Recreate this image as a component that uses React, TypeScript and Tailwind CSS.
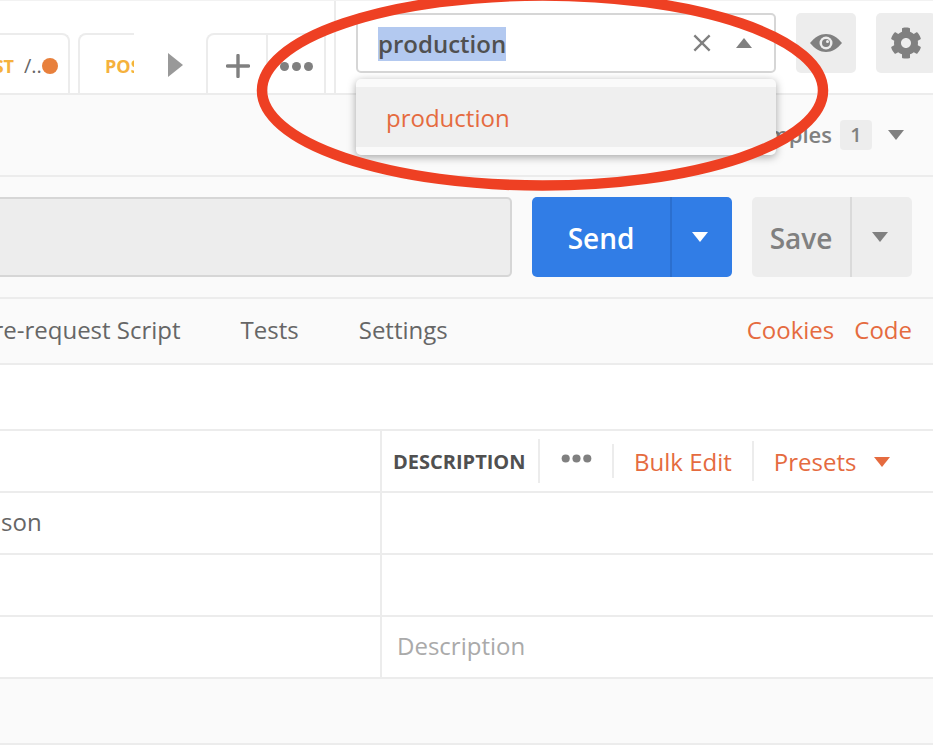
import React from "react";
import { FaCog } from "react-icons/fa";

function Tri({ dir, className }: { dir: "up" | "down" | "right"; className: string }) {
  const pts = dir === "up" ? "0,12 16,12 8,0" : dir === "down" ? "0,0 16,0 8,12" : "0,0 15,12 0,24";
  const vb = dir === "right" ? "0 0 15 24" : "0 0 16 12";
  return (
    <svg viewBox={vb} preserveAspectRatio="none" className={className} fill="currentColor">
      <polygon points={pts} />
    </svg>
  );
}

function Dots({ className }: { className: string }) {
  return (
    <span className={"flex gap-[3px] shrink-0 " + className}>
      <span className="w-[9px] h-[9px] rounded-full bg-[#808080]" />
      <span className="w-[9px] h-[9px] rounded-full bg-[#808080]" />
      <span className="w-[9px] h-[9px] rounded-full bg-[#808080]" />
    </span>
  );
}

function Row({ children }: { children?: React.ReactNode }) {
  return <div className="h-[62px] border-b-2 border-[#ececec] flex bg-white">{children}</div>;
}

export default function App() {
  return (
    <div className="relative w-[933px] h-[749px] overflow-hidden bg-white font-['Open_Sans',sans-serif] text-[24px] text-[#666666]">
      {/* top bar */}
      <div className="h-[95px] border-t border-[#f2f2f2] border-b-2 border-b-[#ececec] flex items-end">
        <div className="w-[70px] shrink-0 h-[60px] border-t-2 border-r-2 border-[#ececec] rounded-tr-lg flex items-center overflow-hidden pt-[4px]">
          <span className="ml-[-36px] w-[50px] text-right text-[18px] font-bold text-[#f5b13d] shrink-0">POST</span>
          <span className="ml-[10px] text-[20px] w-[18px] overflow-hidden shrink-0 whitespace-nowrap">/..</span>
          <span className="w-4 h-4 rounded-full bg-[#e8803c] shrink-0" />
        </div>
        <div className="ml-[8px] w-[56px] shrink-0 h-[60px] border-t-2 border-l-2 border-[#ececec] rounded-tl-lg flex items-center overflow-hidden pt-[4px]">
          <span className="ml-[25px] text-[18px] font-bold text-[#f5b13d] shrink-0">POST</span>
        </div>
        <div className="w-[72px] shrink-0 h-[60px] flex items-center pt-[4px]">
          <Tri dir="right" className="w-[15px] h-[24px] text-[#999999] ml-[34px]" />
        </div>
        <div className="w-[62px] shrink-0 h-[60px] border-t-2 border-l-2 border-r-2 border-[#ececec] rounded-tl-lg flex items-center justify-center pt-[4px]">
          <svg viewBox="0 0 24 24" className="w-6 h-6 ml-[2px]" stroke="#808080" strokeWidth="3.4" strokeLinecap="round">
            <path d="M12 1.5v21M1.5 12h21" />
          </svg>
        </div>
        <div className="w-[58px] shrink-0 h-[60px] border-t-2 border-r-2 border-[#ececec] flex items-center justify-center pt-[4px]">
          <Dots className="" />
        </div>
        <div className="ml-[8px] shrink-0 w-[2px] h-[92px] bg-[#ececec]" />
        <div className="ml-[20px] shrink-0 h-[92px] flex items-start pt-[12px]">
          <div className="w-[420px] h-[60px] bg-white border-2 border-[#d6d6d6] rounded-[5px] flex items-center">
            <span className="ml-[20px] mt-[2px] font-semibold leading-[34px] bg-[#b3c9f0] text-[#505050]">production</span>
            <svg viewBox="0 0 20 20" className="w-[18px] h-[18px] ml-auto" stroke="#808080" strokeWidth="2.6" fill="none">
              <path d="M1.5 1.5l17 17M18.5 1.5l-17 17" />
            </svg>
            <Tri dir="up" className="w-[16px] h-[10px] ml-[25px] mr-[22px] text-[#808080]" />
          </div>
          <div className="ml-[20px] w-[60px] h-[60px] bg-[#ededed] rounded-[5px] flex items-center justify-center">
            <svg viewBox="0 0 32 18" className="w-[32px] h-[18px]">
              <path d="M0 9C5 3 10 0 16 0s11 3 16 9c-5 6-10 9-16 9S5 15 0 9z" fill="#808080" />
              <circle cx="16" cy="9" r="6.5" fill="#ededed" />
              <circle cx="16" cy="9" r="4" fill="#808080" />
              <circle cx="17.5" cy="7.5" r="1.5" fill="#ededed" />
            </svg>
          </div>
          <div className="ml-[20px] w-[60px] h-[60px] bg-[#ededed] rounded-[5px] flex items-center justify-center">
            <FaCog className="w-[32px] h-[32px] text-[#808080]" />
          </div>
        </div>
      </div>

      {/* examples row */}
      <div className="h-[82px] bg-[#fafafa] border-b-2 border-[#ececec] flex items-center justify-end">
        <span className="font-semibold text-[22px] text-[#808080] leading-none mt-[-2px]">Examples</span>
        <span className="ml-[8px] w-[32px] h-[30px] rounded bg-[#ededed] flex items-center justify-center text-[20px] font-semibold text-[#808080]">1</span>
        <Tri dir="down" className="ml-[16px] mr-[29px] w-[16px] h-[10px] text-[#808080]" />
      </div>

      {/* url row */}
      <div className="h-[122px] bg-[#fafafa] border-b-2 border-[#ececec] flex items-start pt-[20px]">
        <div className="w-[512px] h-[80px] bg-[#ededed] border-2 border-l-0 border-[#d6d6d6] rounded-r-[5px]" />
        <div className="ml-[20px] w-[200px] h-[80px] bg-[#317de6] rounded-[5px] flex items-center text-white">
          <span className="w-[140px] border-r-2 border-[#2b6fcf] h-full flex items-center justify-center text-[28px] font-semibold pt-[2px]">Send</span>
          <div className="flex-1 flex justify-center pr-[4px]">
            <Tri dir="down" className="w-[16px] h-[10px] text-white" />
          </div>
        </div>
        <div className="ml-[20px] w-[160px] h-[80px] bg-[#ededed] rounded-[5px] flex items-center text-[#808080]">
          <span className="w-[100px] border-r-2 border-[#dadada] h-full flex items-center justify-center text-[28px] font-semibold pt-[2px]">Save</span>
          <div className="flex-1 flex justify-center pr-[4px]">
            <Tri dir="down" className="w-[16px] h-[10px] text-[#808080]" />
          </div>
        </div>
      </div>

      {/* tabs row */}
      <div className="h-[66px] bg-[#fafafa] border-b-2 border-[#ececec] flex items-center pb-[2px]">
        <span className="ml-[-21px] whitespace-nowrap">Pre-request Script</span>
        <span className="ml-[60px]">Tests</span>
        <span className="ml-[60px]">Settings</span>
        <span className="ml-auto text-[#e56b3f]">Cookies</span>
        <span className="ml-[20px] mr-[21px] text-[#e56b3f]">Code</span>
      </div>

      {/* spacer */}
      <div className="h-[66px] bg-white border-b-2 border-[#ececec]" />

      {/* table header */}
      <div className="h-[62px] border-b-2 border-[#ececec] flex">
        <div className="w-[380px]" />
        <div className="flex-1 border-l-2 border-[#ececec] flex items-center">
          <span className="ml-[11px] mt-[2px] text-[20px] font-bold text-[#505050] w-[131px] whitespace-nowrap">DESCRIPTION</span>
          <span className="ml-[14px] w-[2px] h-[44px] bg-[#ececec]" />
          <Dots className="ml-[20px] -mt-[5px] scale-[0.9]" />
          <span className="ml-[19px] w-[2px] h-[34px] bg-[#ececec]" />
          <span className="ml-[20px] mt-[2px] text-[#e56b3f]">Bulk Edit</span>
          <span className="ml-[20px] w-[2px] h-[40px] bg-[#ececec]" />
          <span className="ml-[20px] mt-[2px] text-[#e56b3f]">Presets</span>
          <Tri dir="down" className="ml-[18px] mt-[2px] w-[16px] h-[10px] text-[#e56b3f]" />
        </div>
      </div>
      <Row>
        <div className="w-[380px] flex items-center overflow-hidden">
          <span className="ml-[-5px] mt-[-2px] whitespace-nowrap">json</span>
        </div>
        <div className="flex-1 border-l-2 border-[#ececec]" />
      </Row>
      <Row>
        <div className="w-[380px]" />
        <div className="flex-1 border-l-2 border-[#ececec]" />
      </Row>
      <Row>
        <div className="w-[380px]" />
        <div className="flex-1 border-l-2 border-[#ececec] flex items-center pl-[15px] pb-[2px] text-[#aaaaaa]">Description</div>
      </Row>
      <div className="h-[66px] bg-[#fafafa] border-b-2 border-[#ececec]" />

      {/* dropdown overlay */}
      <div className="absolute left-[356px] top-[79px] w-[420px] h-[76px] bg-[#fafafa] rounded-[5px] shadow-[0_2px_8px_rgba(0,0,0,0.35)] py-[8px]">
        <div className="h-[60px] bg-[#efefef] flex items-center pl-[30px] pt-[2px] text-[#e56b3f]">production</div>
      </div>

      {/* red annotation ellipse */}
      <svg className="absolute left-0 top-0 pointer-events-none" width="933" height="749" viewBox="0 0 933 749" fill="none">
        <ellipse cx="542.5" cy="90.5" rx="280.5" ry="95" stroke="#ee4023" strokeWidth="10.5" />
      </svg>
    </div>
  );
}
